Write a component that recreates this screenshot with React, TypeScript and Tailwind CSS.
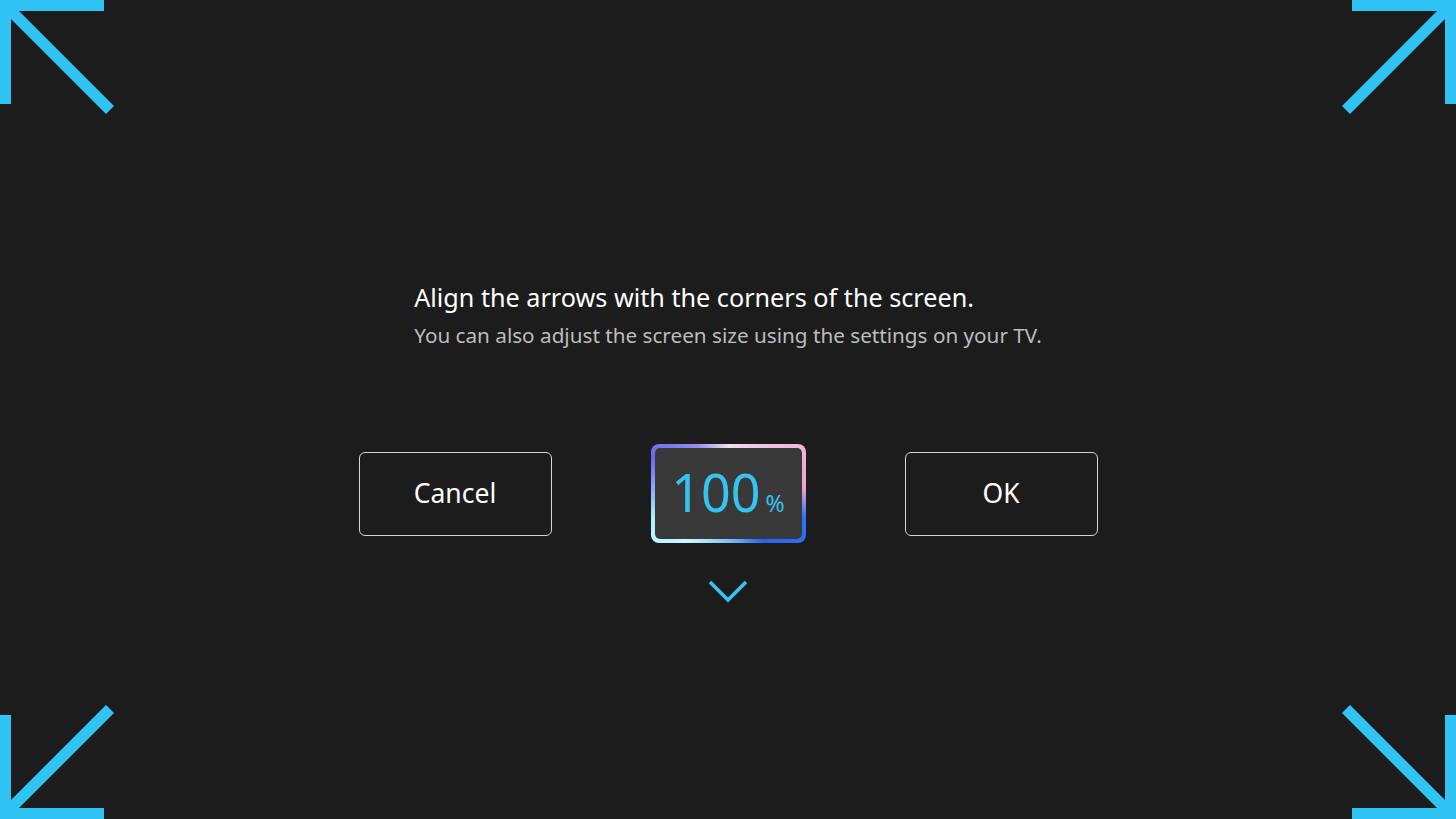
import React from "react";

function Corner({ className }: { className: string }) {
  // top-left orientation; rotated for the other corners
  return (
    <svg viewBox="0 0 114 114" className={className} width={114} height={114}>
      <path d="M0 0H104V11H11V104H0Z" fill="#2fc4f3" />
      <path d="M13 5L114 106L106 114L5 13Z" fill="#2fc4f3" />
    </svg>
  );
}

export default function App() {
  return (
    <div className="relative h-[819px] w-[1456px] overflow-hidden bg-[#1c1c1c] font-['Noto_Sans',sans-serif]">
      <Corner className="absolute left-0 top-0" />
      <Corner className="absolute right-0 top-0 rotate-90" />
      <Corner className="absolute bottom-0 right-0 rotate-180" />
      <Corner className="absolute bottom-0 left-0 -rotate-90" />

      <div className="flex flex-col items-center pt-[279px]">
        <div className="flex w-fit flex-col">
          <h1 className="text-[25.2px] leading-[36px] text-white">Align the arrows with the corners of the screen.</h1>
          <p className="mt-[5px] text-[20.7px] leading-[30px] text-[#bdbdbd]">
            You can also adjust the screen size using the settings on your TV.
          </p>
        </div>

        <div className="mt-[94px] flex items-center gap-[99px]">
          <button className="h-[84px] w-[193px] rounded-[6px] border border-[#d6d6d6] text-[26.5px] text-white">Cancel</button>
          <div className="rounded-[8px] bg-[conic-gradient(from_0deg,#f4dcef,#efb7d8_16%,#ee9fcb_24%,#2f72f6_30%,#2a62ef_40%,#6fb4f7_48%,#c9fbff_62%,#a9f0ff_70%,#6c66ee_82%,#8f8cf2_90%,#f4dcef)] p-[4px]">
            <div className="flex h-[91px] w-[147px] items-baseline justify-center rounded-[5px] bg-[#393939] pt-[6px] text-[#35c3f0]">
              <span className="text-[52px] leading-[76px]">100</span>
              <span className="ml-[5px] text-[23px]">%</span>
            </div>
          </div>
          <button className="h-[84px] w-[193px] rounded-[6px] border border-[#d6d6d6] text-[26.5px] text-white">OK</button>
        </div>

        <svg width="40" height="24" viewBox="0 0 40 24" className="mt-[36px]">
          <path d="M2 3L20 21L38 3" fill="none" stroke="#35c3f0" strokeWidth="3.5" />
        </svg>
      </div>
    </div>
  );
}
